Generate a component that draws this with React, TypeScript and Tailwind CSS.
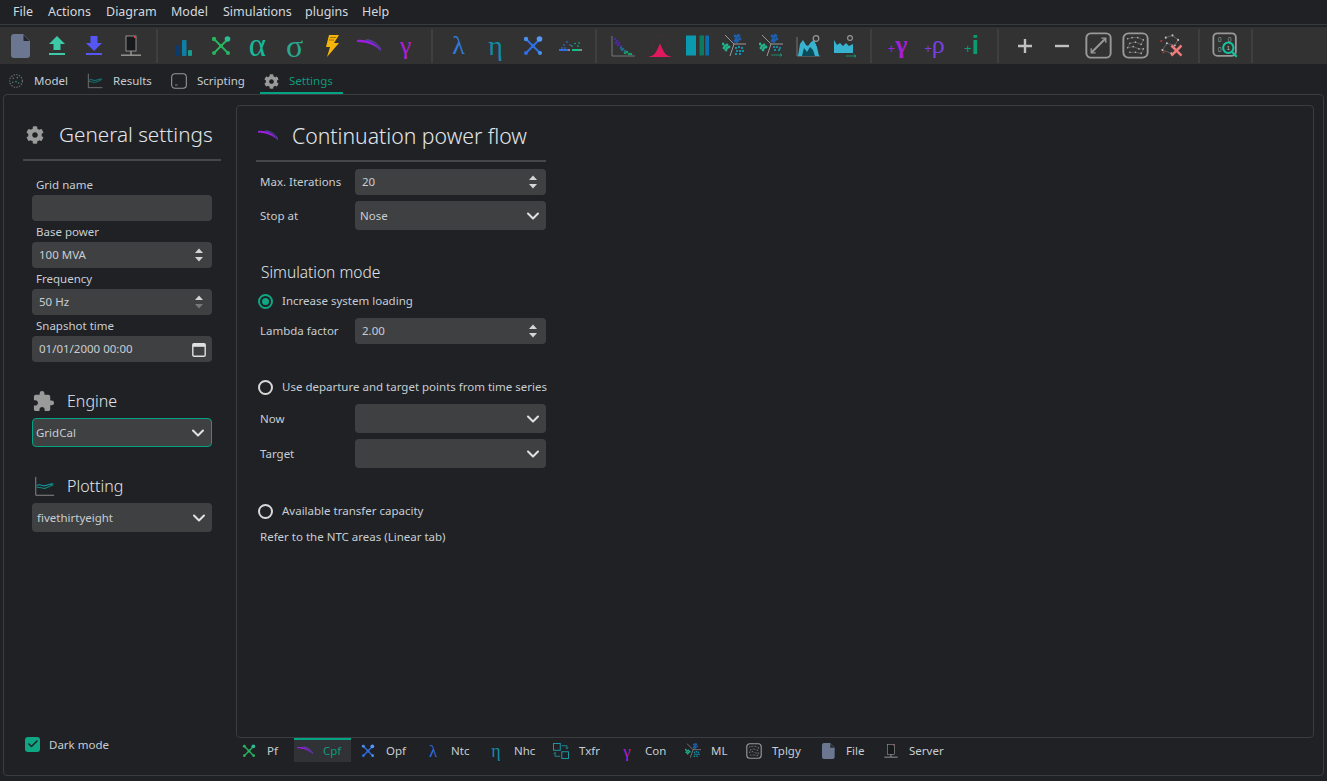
import { Check, ChevronDown } from "lucide-react";
import type { ReactNode } from "react";
import { FaCog } from "react-icons/fa";
import { MdExtension } from "react-icons/md";

type IconProps = { size?: number };

function Svg({ size = 24, children }: IconProps & { children: ReactNode }) {
  return (
    <svg width={size} height={size} viewBox="0 0 24 24" fill="none" className="shrink-0">
      {children}
    </svg>
  );
}

function Dots({ pts, color, r = 0.8 }: { pts: number[][]; color: string; r?: number }) {
  return (
    <>
      {pts.map(([x, y], i) => (
        <circle key={i} cx={x} cy={y} r={r} fill={color} />
      ))}
    </>
  );
}

const FileIcon = ({ size }: IconProps) => (
  <Svg size={size}>
    <path d="M6 0h9l7 7v14a3 3 0 0 1-3 3H6a3 3 0 0 1-3-3V3a3 3 0 0 1 3-3z" fill="#6b7690" />
    <path d="M15.5 1v6h6z" fill="#24262b" />
  </Svg>
);
const UploadIcon = () => (
  <Svg>
    <path d="M12 2l8 8h-4.5v6h-7v-6H4z" fill="#3ccaa6" />
    <rect x="4" y="19" width="16" height="2" fill="#3ccaa6" />
  </Svg>
);
const DownloadIcon = () => (
  <Svg>
    <path d="M8.5 2h7v7H20l-8 8-8-8h4.5z" fill="#5656f5" />
    <rect x="4" y="19" width="16" height="2" fill="#5656f5" />
  </Svg>
);
const ServerIcon = ({ size }: IconProps) => (
  <Svg size={size}>
    <rect x="7" y="2" width="10" height="15" fill="#17191d" stroke="#aaa" strokeWidth="0.8" />
    <rect x="15" y="2" width="2" height="2" fill="#e23b3b" />
    <rect x="11.3" y="17" width="1.4" height="4" fill="#999" />
    <rect x="2" y="20.5" width="20" height="1.4" fill="#999" />
  </Svg>
);
const BarsIcon = () => (
  <Svg>
    <rect x="4" y="11" width="4" height="11" rx="1" fill="#0b3a6b" />
    <rect x="10" y="6" width="4.5" height="16" rx="1" fill="#0f7fa8" />
    <rect x="16" y="16" width="4" height="6" rx="1" fill="#179c8c" />
  </Svg>
);
const CrossNet = ({ size, line, dot, tip }: IconProps & { line: string; dot: string; tip: string }) => (
  <Svg size={size}>
    <path d="M5 5l14 14M5 19L19 5" stroke={line} strokeWidth="2" />
    <circle cx="5" cy="5" r="2.2" fill={dot} />
    <circle cx="19" cy="19" r="2" fill={dot} />
    <circle cx="5" cy="19" r="2" fill={line} />
    <circle cx="18.5" cy="5" r="2.8" fill={tip} />
    <rect x="10" y="10" width="4" height="4" fill={line} />
  </Svg>
);
const PfIcon = ({ size }: IconProps) => <CrossNet size={size} line="#27b35f" dot="#27b35f" tip="#2bbd92" />;
const OpfIcon = ({ size }: IconProps) => <CrossNet size={size} line="#2f6fe0" dot="#4a90f0" tip="#5599f5" />;
const BoltIcon = () => (
  <Svg>
    <path d="M9 1h10l-5 8h5L7 23l3-10H6z" fill="#f5b40a" />
    <path d="M10 3.5h6M9 6h5" stroke="#7a5a05" strokeWidth="0.7" />
  </Svg>
);
const CpfIcon = ({ size }: IconProps) => (
  <Svg size={size}>
    <path d="M0 6c9-1 18 2 24 11C18 11 9 8 0 8z" fill="#9a1de0" />
    <path d="M8 6c6 1 12 4 16 11" stroke="#5a3fd0" strokeWidth="0.8" />
    <path d="M10 5.5c6 1 11 4 14 10" stroke="#7a4ae0" strokeWidth="0.7" />
  </Svg>
);
const GreekIcon = ({ glyph, color, font, big = 30 }: { glyph: string; color: string; font?: string; big?: number }) => (
  <span
    className={`flex h-6 w-6 items-center justify-center leading-none ${font ?? "font-['Liberation_Serif',serif]"}`}
    style={{ color, fontSize: big }}
  >
    {glyph}
  </span>
);
const NhcIcon = () => (
  <Svg>
    <Dots pts={[[6, 11], [9, 8], [12, 11], [4, 14], [7, 14]]} color="#3a78e8" />
    <Dots pts={[[14, 12], [17, 9.5], [20, 12], [21, 9]]} color="#14c08a" />
    <rect x="1" y="15" width="9" height="2" fill="#2f6fe0" />
    <rect x="10" y="15" width="2" height="2" fill="#888" />
    <rect x="14" y="15" width="8" height="2" fill="#14c08a" />
    <rect x="22" y="15" width="2" height="2" fill="#888" />
  </Svg>
);
const ScatterIcon = () => (
  <Svg>
    <path d="M1 2v20h24" stroke="#777" strokeWidth="1" />
    <Dots pts={[[4, 5], [6, 7], [5, 9], [8, 9], [7, 11], [10, 12]]} color="#4a2a9a" r={1.3} />
    <Dots pts={[[10, 14], [12, 15], [11, 16], [14, 17]]} color="#1f6a8a" r={1.3} />
    <Dots pts={[[14, 19], [16, 18], [18, 20], [20, 20]]} color="#1a9a6a" r={1.3} />
  </Svg>
);
const BellIcon = () => (
  <Svg>
    <Dots pts={[[4, 2], [9, 2], [14, 2], [19, 2], [4, 7], [9, 7], [14, 7], [19, 7], [4, 12], [19, 12], [4, 17], [19, 17]]} color="#7a2038" r={0.6} />
    <path d="M0 23C5 22 7 20 9 16L12 9.5L15 16C17 20 19 22 24 23Z" fill="#e0195f" />
  </Svg>
);
const StackIcon = () => (
  <Svg>
    <rect x="1" y="1.5" width="10" height="20" fill="#0a9ab0" />
    <rect x="14.5" y="1.5" width="4.5" height="20" fill="#0a7a60" />
    <rect x="20.3" y="1.5" width="3.7" height="20" fill="#0a6eaa" />
  </Svg>
);
const ClusterIcon = ({ size, arrow = false }: IconProps & { arrow?: boolean }) => (
  <Svg size={size}>
    <path d="M3 1l9 9M12 10l-4 12M12 10h12" stroke="#999" strokeWidth="1" />
    <Dots pts={[[13, 2], [15, 3], [17, 2], [14, 5], [16, 6], [18, 5], [15, 7.5], [16, 1.5], [13, 7]]} color="#1d5fae" r={1.4} />
    <Dots pts={[[1, 10], [3, 12], [5, 11], [2, 14], [5, 14], [7, 13], [4, 16]]} color="#22b58d" r={1.4} />
    {!arrow && <Dots pts={[[14, 14], [17, 13], [20, 14], [15, 17], [18, 17], [21, 17], [14, 20], [18, 20]]} color="#0aa8c8" r={1.1} />}
    {arrow && <Dots pts={[[15, 13], [18, 13], [21, 14], [16, 16], [20, 16]]} color="#0aa8c8" r={1} />}
    {arrow && <path d="M12 21h11m-2-1.5l2 1.5-2 1.5" stroke="#129a7a" strokeWidth="0.9" />}
  </Svg>
);
const AreaIcon = () => (
  <Svg>
    <path d="M1 3v19h23" stroke="#777" strokeWidth="1" />
    <path d="M2 22L4 10l3-4 3 5 2 1 3-4 3-2 3 7 2 9Z" fill="#37b3cf" />
    <path d="M6 22l2-8 3 4 3-5 3 3 2 6Z" fill="#0b4a5a" />
    <circle cx="20" cy="4.5" r="2.8" stroke="#999" strokeWidth="1.2" />
  </Svg>
);
const AreaArrowIcon = () => (
  <Svg>
    <path d="M1 6l3 5 3-2 3 3 3-3 3 3 4-2v9H1z" fill="#37b3cf" />
    <circle cx="17" cy="4" r="2.4" stroke="#999" strokeWidth="1.1" />
    <path d="M13 22h10m-2-1.5l2 1.5-2 1.5" stroke="#129a7a" strokeWidth="0.9" />
  </Svg>
);
const PlusText = ({ plus, glyph, color, font, sz }: { plus: string; glyph: string; color: string; font?: string; sz: number }) => (
  <span className="flex h-6 w-6 items-center justify-center leading-none" style={{ color }}>
    <span className="mt-[6px] font-['Liberation_Sans',sans-serif] text-[13px]">{plus}</span>
    <span className={`-mt-[2px] ${font ?? "font-['Liberation_Serif',serif]"}`} style={{ fontSize: sz }}>
      {glyph}
    </span>
  </span>
);
const PlusIcon = () => (
  <Svg>
    <path d="M5 12h14M12 5v14" stroke="#c0c0c0" strokeWidth="2.4" />
  </Svg>
);
const MinusIcon = () => (
  <Svg>
    <path d="M5 12h14" stroke="#c0c0c0" strokeWidth="2.4" />
  </Svg>
);
const BoxLine = () => (
  <Svg size={27}>
    <rect x="1.2" y="1.2" width="21.6" height="21.6" rx="4" stroke="#999" strokeWidth="1.7" />
    <path d="M6 18L18 6" stroke="#999" strokeWidth="1.8" />
    <path d="M14.5 5.5h4v4M5.5 14.5v4h4" stroke="#999" strokeWidth="1.2" />
  </Svg>
);
const netPts = [
  [5, 6], [9, 5], [14, 5], [19, 7], [7, 10], [12, 9], [17, 11], [5, 14], [10, 13], [15, 15], [19, 15], [7, 18], [12, 18], [17, 19],
];
const BoxNet = ({ size = 27 }: IconProps) => (
  <Svg size={size}>
    <rect x="1.2" y="1.2" width="21.6" height="21.6" rx="4.5" stroke="#999" strokeWidth="1.7" />
    <path d="M5 6l4-1 5 0 5 2-2 4-5-2-5 1-2 4 5-1 5 2 4 0-2 4-5-1-5 0" stroke="#707070" strokeWidth="0.6" />
    <Dots pts={netPts} color="#b5b5b5" r={0.7} />
  </Svg>
);
const NetCross = () => (
  <Svg size={27}>
    <path d="M6 5l6-2 5 4-3 5-7-2-4 6 8 3" stroke="#777" strokeWidth="0.6" />
    <Dots pts={[[6, 5], [12, 3], [17, 7], [14, 12], [7, 10], [3, 16], [11, 19]]} color="#c0c0c0" r={0.9} />
    <Dots pts={[[2, 8], [4, 18]]} color="#b33" r={1} />
    <path d="M11 12l9 9M20 12l-9 9" stroke="#f07878" strokeWidth="2.2" />
  </Svg>
);
const BinarySearch = () => (
  <Svg size={27}>
    <rect x="1.2" y="1.2" width="20" height="20" rx="3.5" stroke="#999" strokeWidth="1.6" />
    <circle cx="14.5" cy="14" r="4.6" stroke="#16c3a0" strokeWidth="1.8" />
    <path d="M18 18l4 4" stroke="#16c3a0" strokeWidth="2" />
    <text x="5" y="9" fontSize="6" fill="#999" fontFamily="Liberation Sans">0</text>
    <text x="14" y="9" fontSize="6" fill="#999" fontFamily="Liberation Sans">0</text>
    <text x="5" y="18" fontSize="6" fill="#999" fontFamily="Liberation Sans">0</text>
    <text x="13" y="16" fontSize="5" fill="#ccc" fontFamily="Liberation Sans">1</text>
  </Svg>
);
const ChartIcon = ({ size = 24 }: IconProps) => (
  <Svg size={size}>
    <path d="M2 1v21h21" stroke="#8a8a8a" strokeWidth="1.1" />
    <path d="M3 11c4-3 6 1 10 0s5-2 9-2" stroke="#0f9ba8" strokeWidth="1.2" />
    <path d="M3 13c4-1 7 2 10 1s6-3 9-4" stroke="#128a78" strokeWidth="1.2" />
  </Svg>
);
const ModelIcon = () => (
  <Svg size={16}>
    <circle cx="12" cy="12" r="9.5" stroke="#777" strokeWidth="1.6" strokeDasharray="2 2" />
    <Dots pts={[[8, 8], [14, 7], [12, 13], [7, 14], [16, 15]]} color="#3a8a78" r={1.2} />
  </Svg>
);
const ScriptIcon = () => (
  <Svg size={16}>
    <rect x="1" y="1" width="22" height="22" rx="5" stroke="#999" strokeWidth="1.6" />
    <path d="M6 18h4" stroke="#999" strokeWidth="1.2" />
  </Svg>
);
const TxfrIcon = () => (
  <Svg size={18}>
    <rect x="2" y="2" width="9" height="9" stroke="#1d9aa8" strokeWidth="1.3" />
    <rect x="13" y="13" width="9" height="9" stroke="#1d9aa8" strokeWidth="1.3" />
    <path d="M13 5h7v4m-1.5-1.5L20 9l1.5-1.5M11 19H4v-5m-1.5 1.5L4 14l1.5 1.5" stroke="#1d9aa8" strokeWidth="1.1" />
  </Svg>
);

const menus = [
  ["File", "w-[35px]"],
  ["Actions", "w-[58px]"],
  ["Diagram", "w-[65px]"],
  ["Model", "w-[52px]"],
  ["Simulations", "w-[82px]"],
  ["plugins", "w-[57px]"],
  ["Help", "w-[40px]"],
] as const;

const toolbarGroups: ReactNode[][] = [
  [<FileIcon />, <UploadIcon />, <DownloadIcon />, <ServerIcon />],
  [
    <BarsIcon />,
    <PfIcon />,
    <GreekIcon glyph="α" color="#16b89a" big={33} />,
    <GreekIcon glyph="σ" color="#2aa78f" big={32} />,
    <BoltIcon />,
    <CpfIcon />,
    <GreekIcon glyph="γ" color="#b01fd8" big={26} />,
  ],
  [
    <GreekIcon glyph="λ" color="#2f7be0" big={26} />,
    <GreekIcon glyph="η" color="#0f8ea8" big={28} />,
    <OpfIcon />,
    <NhcIcon />,
  ],
  [
    <ScatterIcon />,
    <BellIcon />,
    <StackIcon />,
    <ClusterIcon />,
    <ClusterIcon arrow />,
    <AreaIcon />,
    <AreaArrowIcon />,
  ],
  [
    <PlusText plus="+" glyph="γ" color="#a41fd8" sz={26} font="font-['Liberation_Serif',serif] font-bold" />,
    <PlusText plus="+" glyph="ρ" color="#7a3fe0" sz={26} />,
    <PlusText plus="+" glyph="i" color="#0c9a72" sz={26} font="font-['Liberation_Sans',sans-serif] font-bold" />,
  ],
  [<PlusIcon />, <MinusIcon />, <BoxLine />, <BoxNet />, <NetCross />],
  [<BinarySearch />],
];

const topTabs = [
  { label: "Model", icon: <ModelIcon />, cls: "w-[79px]" },
  { label: "Results", icon: <ChartIcon size={16} />, cls: "w-[84px]" },
  { label: "Scripting", icon: <ScriptIcon />, cls: "w-[89px]" },
];

const bottomTabs = [
  { label: "Pf", icon: <PfIcon size={16} />, cls: "w-[53px]" },
  { label: "Opf", icon: <OpfIcon size={16} />, cls: "w-[74px] pl-[9px]" },
  { label: "Ntc", icon: <GreekIcon glyph="λ" color="#2f6fe0" big={17} />, cls: "w-[63px]" },
  { label: "Nhc", icon: <GreekIcon glyph="η" color="#0f8ea8" big={18} />, cls: "w-[65px]" },
  { label: "Txfr", icon: <TxfrIcon />, cls: "w-[66px]" },
  { label: "Con", icon: <GreekIcon glyph="γ" color="#b01fd8" big={17} />, cls: "w-[66px]" },
  { label: "ML", icon: <ClusterIcon size={16} />, cls: "w-[61px]" },
  { label: "Tplgy", icon: <BoxNet size={16} />, cls: "w-[74px]" },
  { label: "File", icon: <FileIcon size={16} />, cls: "w-[63px]" },
  { label: "Server", icon: <ServerIcon size={16} />, cls: "w-[70px]" },
];

function TabLabel({ icon, label, active }: { icon: ReactNode; label: string; active?: boolean }) {
  return (
    <>
      <span className="flex h-4 w-4 items-center justify-center overflow-visible">{icon}</span>
      <span className={`ml-[10px] ${active ? "text-[#0f9a7c]" : "text-[#c8cdd3]"}`}>{label}</span>
    </>
  );
}

function Spin({ dimDown }: { dimDown?: boolean }) {
  return (
    <svg width="10" height="18" viewBox="0 0 10 18" className="shrink-0">
      <path d="M5 2.5l4 4.5H1z" fill="#d5d5d5" />
      <path d="M5 15.5L1 11h8z" fill={dimDown ? "#777" : "#d5d5d5"} />
    </svg>
  );
}

function SpinBox({ value, dimDown }: { value: string; dimDown?: boolean }) {
  return (
    <div className="flex h-[26px] items-center justify-between rounded-[4px] bg-[#3f4042] pl-[7px] pr-[8px]">
      <span>{value}</span>
      <Spin dimDown={dimDown} />
    </div>
  );
}

function Combo({ value, focused }: { value?: string; focused?: boolean }) {
  return (
    <div
      className={`flex h-[29px] items-center justify-between rounded-[4px] bg-[#3f4042] pr-[3px] ${
        focused ? "border border-[#00a384] pl-[3px]" : "pl-[5px]"
      }`}
    >
      <span>{value}</span>
      <ChevronDown size={20} strokeWidth={2.4} className="text-[#e2e2e2]" />
    </div>
  );
}

function Radio({ checked, label, cls }: { checked?: boolean; label: string; cls: string }) {
  return (
    <div className={`flex items-center ${cls}`}>
      {checked ? (
        <span className="flex h-[15px] w-[15px] items-center justify-center rounded-full border-2 border-[#0fa684]">
          <span className="h-[7px] w-[7px] rounded-full bg-[#0fa684]" />
        </span>
      ) : (
        <span className="h-[15px] w-[15px] rounded-full border-2 border-[#d8d8d8]" />
      )}
      <span className="ml-[9px]">{label}</span>
    </div>
  );
}

function Row({ label, children, cls }: { label: string; children: ReactNode; cls?: string }) {
  return (
    <div className={`flex items-center ${cls ?? ""}`}>
      <span className="w-[99px] pl-[4px]">{label}</span>
      <div className="w-[191px]">{children}</div>
    </div>
  );
}

function GeneralField({ label, children }: { label: string; children: ReactNode }) {
  return (
    <div>
      <div className="flex h-[21px] items-center pl-[4px]">{label}</div>
      {children}
    </div>
  );
}

export default function App() {
  return (
    <div className="h-[781px] w-[1327px] overflow-hidden bg-[#1f2125] font-['Noto_Sans',sans-serif] text-[11.5px] text-[#c8cdd3]">
      {/* menu */}
      <div className="flex h-[25px] items-center border-b border-[#3a3b3e] pl-[13px] text-[12.5px]">
        {menus.map(([m, w]) => (
          <span key={m} className={`${w} text-[#d5d9de]`}>
            {m}
          </span>
        ))}
      </div>
      <div className="h-[2px]" />

      {/* toolbar */}
      <div className="flex h-[37px] items-center bg-[#323232] pl-[1px]">
        {toolbarGroups.map((group, g) => (
          <div key={g} className="flex items-center">
            {group.map((icon, i) => (
              <div key={i} className="flex h-[37px] w-[37px] items-center justify-center">
                {icon}
              </div>
            ))}
            <div className="flex w-[16px] justify-center">
              <div className="h-[34px] w-[2px] bg-[#3f3f3f]" />
            </div>
          </div>
        ))}
      </div>

      {/* top tabs */}
      <div className="flex h-[30px] items-center pl-[8px]">
        {topTabs.map((t) => (
          <div key={t.label} className={`flex items-center pt-[4px] ${t.cls}`}>
            <TabLabel icon={t.icon} label={t.label} />
          </div>
        ))}
        <div className="flex h-[30px] w-[83px] items-center border-b-2 border-[#00a384] pl-[3px] pt-[6px]">
          <TabLabel icon={<FaCog size={15} className="text-[#9a9a9a]" />} label="Settings" active />
        </div>
      </div>

      {/* main frame */}
      <div className="mx-[3px] flex h-[682px] rounded-[4px] border border-[#3a3c40]">
        <aside className="flex w-[232px] shrink-0 flex-col">
          <div className="ml-[19px] mr-[15px] flex h-[66px] items-center border-b-2 border-[#45474a] pl-[3px] pt-[15px]">
            <FaCog size={18} className="text-[#9a9a9a]" />
            <span className="ml-[15px] text-[20.7px] font-light text-[#e2e6ea]">General settings</span>
          </div>
          <div className="mx-[28px] mt-[13px] flex w-[180px] flex-col">
            <GeneralField label="Grid name">
              <div className="h-[26px] rounded-[4px] bg-[#3f4042]" />
            </GeneralField>
            <GeneralField label="Base power">
              <SpinBox value="100 MVA" />
            </GeneralField>
            <GeneralField label="Frequency">
              <SpinBox value="50 Hz" dimDown />
            </GeneralField>
            <GeneralField label="Snapshot time">
              <div className="flex h-[26px] items-center justify-between rounded-[4px] bg-[#3f4042] pl-[7px] pr-[6px]">
                <span>01/01/2000 00:00</span>
                <svg width="14" height="15" viewBox="0 0 14 15">
                  <rect x="0.8" y="1.8" width="12.4" height="12.4" rx="1.2" fill="none" stroke="#e0e0e0" strokeWidth="1.4" />
                  <rect x="0.8" y="1.8" width="12.4" height="3" fill="#e0e0e0" />
                </svg>
              </div>
            </GeneralField>

            <div className="mt-[26px] flex h-[26px] items-center">
              <MdExtension size={23} className="text-[#9a9a9a]" />
              <span className="ml-[12px] text-[16px] font-light text-[#e2e6ea]">Engine</span>
            </div>
            <div className="mt-[4px]">
              <Combo value="GridCal" focused />
            </div>

            <div className="mt-[26px] flex h-[26px] items-center pl-[2px]">
              <ChartIcon size={21} />
              <span className="ml-[12px] text-[16px] font-light text-[#e2e6ea]">Plotting</span>
            </div>
            <div className="mt-[4px]">
              <Combo value="fivethirtyeight" />
            </div>
          </div>
          <div className="mt-auto mb-[22px] ml-[21px] flex items-center">
            <span className="flex h-[15px] w-[15px] items-center justify-center rounded-[3px] bg-[#0fa684]">
              <Check size={12} strokeWidth={3} className="text-[#1f2125]" />
            </span>
            <span className="ml-[9px]">Dark mode</span>
          </div>
        </aside>

        <div className="flex min-w-0 flex-1 flex-col pr-[9px] pt-[10px]">
          <section className="h-[633px] rounded-[4px] border border-[#3a3c40] pl-[19px] pt-[14px]">
            <div className="w-[290px]">
              <div className="flex h-[42px] items-center border-b-2 border-[#45474a] pb-[8px] pl-[2px]">
                <CpfIcon size={20} />
                <span className="ml-[14px] text-[21.2px] font-light text-[#e2e6ea]">Continuation power flow</span>
              </div>
            </div>
            <Row label="Max. Iterations" cls="mt-[7px]">
              <SpinBox value="20" />
            </Row>
            <Row label="Stop at" cls="mt-[6px]">
              <Combo value="Nose" />
            </Row>
            <div className="mt-[30px] flex h-[26px] items-center pl-[5px] text-[15.5px] font-light text-[#e2e6ea]">Simulation mode</div>
            <Radio checked label="Increase system loading" cls="mt-[3px] h-[24px] pl-[2px]" />
            <Row label="Lambda factor" cls="mt-[5px]">
              <SpinBox value="2.00" />
            </Row>
            <Radio label="Use departure and target points from time series" cls="mt-[31px] h-[24px] pl-[2px]" />
            <Row label="Now" cls="mt-[5px]">
              <Combo />
            </Row>
            <Row label="Target" cls="mt-[6px]">
              <Combo />
            </Row>
            <Radio label="Available transfer capacity" cls="mt-[31px] h-[24px] pl-[2px]" />
            <div className="mt-[4px] flex h-[20px] items-center pl-[4px]">Refer to the NTC areas (Linear tab)</div>
          </section>

          <div className="flex h-[24px] pl-[5px]">
            {bottomTabs.slice(0, 1).map((t) => (
              <div key={t.label} className={`flex items-center pt-[2px] ${t.cls}`}>
                <TabLabel icon={t.icon} label={t.label} />
              </div>
            ))}
            <div className="flex w-[57px] items-center border-t-2 border-[#00a384] bg-[#313236] pl-[3px]">
              <TabLabel icon={<CpfIcon size={16} />} label="Cpf" active />
            </div>
            {bottomTabs.slice(1).map((t) => (
              <div key={t.label} className={`flex items-center pt-[2px] ${t.cls}`}>
                <TabLabel icon={t.icon} label={t.label} />
              </div>
            ))}
          </div>
        </div>
      </div>
    </div>
  );
}
